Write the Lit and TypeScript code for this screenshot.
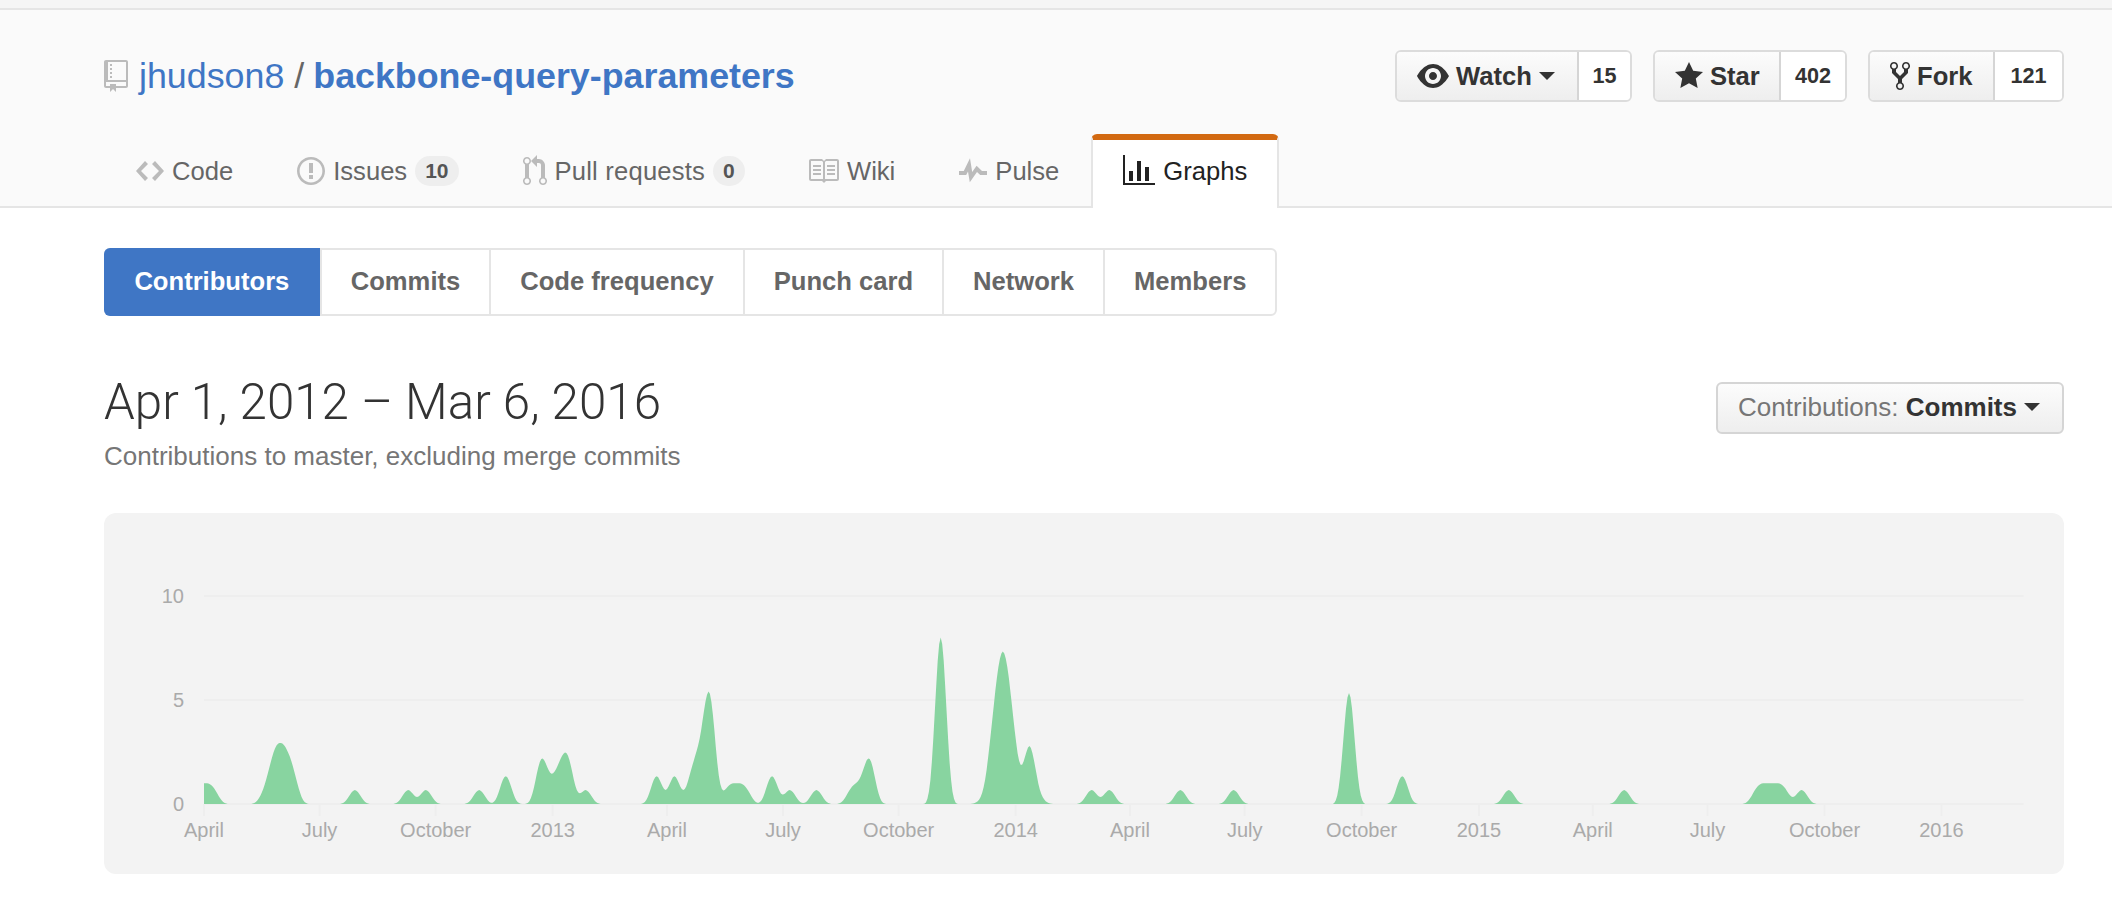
import { LitElement, html, css, svg } from 'lit';
import { customElement } from 'lit/decorators.js';

// octicon paths, drawn at 2x
const ICONS: Record<string, { box: string; w: number; h: number; d: string }> = {
  repo: { box: '0 0 12 16', w: 24, h: 32, d: 'M4 9H3V8h1v1zm0-3H3v1h1V6zm0-2H3v1h1V4zm0-2H3v1h1V2zm8-1v12c0 .55-.45 1-1 1H6v2l-1.5-1.5L3 16v-2H1c-.55 0-1-.45-1-1V1c0-.55.45-1 1-1h10c.55 0 1 .45 1 1zm-1 10H1v2h2v-1h3v1h5v-2zm0-10H2v9h9V1z' },
  code: { box: '0 0 14 16', w: 28, h: 32, d: 'M9.5 3L8 4.5 11.5 8 8 11.5 9.5 13 14 8 9.5 3zm-5 0L0 8l4.5 5L6 11.5 2.5 8 6 4.5 4.5 3z' },
  issue: { box: '0 0 14 16', w: 28, h: 32, d: 'M7 2.3c3.14 0 5.7 2.56 5.7 5.7s-2.56 5.7-5.7 5.7A5.71 5.71 0 0 1 1.3 8c0-3.14 2.56-5.7 5.7-5.7zM7 1C3.14 1 0 4.14 0 8s3.14 7 7 7 7-3.14 7-7-3.14-7-7-7zm1 3H6v5h2V4zm0 6H6v2h2v-2z' },
  pull: { box: '0 0 12 16', w: 24, h: 32, d: 'M11 11.28V5c-.03-.78-.34-1.47-.94-2.06C9.46 2.35 8.78 2.03 8 2H7V0L4 3l3 3V4h1c.27.02.48.11.69.31.21.2.3.42.31.69v6.28A1.993 1.993 0 0 0 10 15a1.993 1.993 0 0 0 1-3.72zm-1 2.92c-.66 0-1.2-.55-1.2-1.2 0-.65.55-1.2 1.2-1.2.65 0 1.2.55 1.2 1.2 0 .65-.55 1.2-1.2 1.2zM4 3c0-1.11-.89-2-2-2a1.993 1.993 0 0 0-1 3.72v6.56A1.993 1.993 0 0 0 2 15a1.993 1.993 0 0 0 1-3.72V4.72c.59-.34 1-.98 1-1.72zm-.8 10c0 .66-.55 1.2-1.2 1.2-.65 0-1.2-.55-1.2-1.2 0-.65.55-1.2 1.2-1.2.65 0 1.2.55 1.2 1.2zM2 4.2C1.34 4.2.8 3.65.8 3c0-.65.55-1.2 1.2-1.2.65 0 1.2.55 1.2 1.2 0 .65-.55 1.2-1.2 1.2z' },
  book: { box: '1 0 15 16', w: 30, h: 32, d: 'M3 5h4v1H3V5zm0 3h4V7H3v1zm0 2h4V9H3v1zm11-5h-4v1h4V5zm0 2h-4v1h4V7zm0 2h-4v1h4V9zm2-6v9c0 .55-.45 1-1 1H9.5l-1 1-1-1H2c-.55 0-1-.45-1-1V3c0-.55.45-1 1-1h5.5l1 1 1-1H15c.55 0 1 .45 1 1zm-8 .5L7.5 3H2v9h6V3.5zm7-.5H9.5l-.5.5V12h6V3z' },
  pulse: { box: '0 0 14 16', w: 28, h: 32, d: 'M11.5 8L8.8 5.4 6.6 8.5 5.5 1.6 2.38 8H0v2h3.6l.9-1.8.9 5.4L9 8.5l1.6 1.5H14V8h-2.5z' },
  graph: { box: '0 0 16 16', w: 32, h: 32, d: 'M16 14v1H0V0h1v14h15zM5 13H3V8h2v5zm4 0H7V3h2v10zm4 0h-2V6h2v7z' },
  eye: { box: '0 0 16 16', w: 32, h: 32, d: 'M8.06 2C3 2 0 8 0 8s3 6 8.06 6C13 14 16 8 16 8s-3-6-7.94-6zM8 12c-2.2 0-4-1.78-4-4 0-2.2 1.8-4 4-4 2.22 0 4 1.8 4 4 0 2.22-1.78 4-4 4zm2-4c0 1.11-.89 2-2 2-1.11 0-2-.89-2-2 0-1.11.89-2 2-2 1.11 0 2 .89 2 2z' },
  star: { box: '0 0 14 16', w: 28, h: 32, d: 'M14 6l-4.9-.64L7 1 4.9 5.36 0 6l3.6 3.26L2.67 14 7 11.67 11.33 14l-.93-4.74L14 6z' },
  fork: { box: '0 0 10 16', w: 20, h: 32, d: 'M8 1a1.993 1.993 0 0 0-1 3.72V6L5 8 3 6V4.72A1.993 1.993 0 0 0 2 1a1.993 1.993 0 0 0-1 3.72V6.5l3 3v1.78A1.993 1.993 0 0 0 5 15a1.993 1.993 0 0 0 1-3.72V9.5l3-3V4.72A1.993 1.993 0 0 0 8 1zM2 4.2C1.34 4.2.8 3.65.8 3c0-.65.55-1.2 1.2-1.2.65 0 1.2.55 1.2 1.2 0 .65-.55 1.2-1.2 1.2zm3 10c-.66 0-1.2-.55-1.2-1.2 0-.65.55-1.2 1.2-1.2.65 0 1.2.55 1.2 1.2 0 .65-.55 1.2-1.2 1.2zm3-10c-.66 0-1.2-.55-1.2-1.2 0-.65.55-1.2 1.2-1.2.65 0 1.2.55 1.2 1.2 0 .65-.55 1.2-1.2 1.2z' },
};

const icon = (name: string) => {
  const i = ICONS[name];
  return html`<svg class="icon" viewBox=${i.box} width=${i.w} height=${i.h} fill="currentColor"><path d=${i.d}></path></svg>`;
};

// commits per week, only the weeks that have any
const COMMITS: Record<number, number> = {
  0: 1, 1: 1, 7: 1, 8: 3, 9: 3, 10: 2, 17: 1, 23: 1, 25: 1, 31: 1, 34: 2,
  38: 3, 39: 1, 40: 2, 41: 3, 43: 1, 51: 2, 53: 2, 55: 2, 56: 3, 57: 7.2,
  59: 1, 60: 1, 61: 1, 64: 2, 66: 1, 69: 1, 73: 1, 74: 1, 75: 3, 83: 12,
  88: 0.5, 89: 5, 90: 8.5, 91: 5, 92: 0.6, 93: 3.9, 94: 0.5, 100: 1, 102: 1,
  110: 1, 116: 1, 129: 8, 135: 2, 147: 1, 160: 1, 175: 1, 176: 1, 177: 1,
  178: 1, 180: 1,
};

const WEEKS = 205;
const WEEK_W = 8.876;
const UNIT_H = 20.8;
const X0 = 100;
const Y0 = 291;

const TICKS: [string, number][] = [
  ['April', 100], ['July', 215.6], ['October', 331.7], ['2013', 448.7],
  ['April', 563], ['July', 679], ['October', 794.7], ['2014', 911.7],
  ['April', 1026], ['July', 1140.7], ['October', 1257.7], ['2015', 1375],
  ['April', 1488.8], ['July', 1603.5], ['October', 1720.5], ['2016', 1837.5],
];

// uniform b-spline through the weekly counts, same shape as a d3 basis area
function areaPath() {
  const at = (i: number) => COMMITS[Math.max(0, Math.min(WEEKS, i))] ?? 0;
  let d = `M${X0} ${Y0}`;
  for (let w = 0; w < WEEKS; w++) {
    for (let s = 0; s < 6; s++) {
      const t = s / 6;
      const v =
        (((1 - t) ** 3) * at(w - 1) +
          (3 * t ** 3 - 6 * t ** 2 + 4) * at(w) +
          (-3 * t ** 3 + 3 * t ** 2 + 3 * t + 1) * at(w + 1) +
          t ** 3 * at(w + 2)) / 6;
      d += `L${(X0 + (w + t) * WEEK_W).toFixed(1)} ${(Y0 - v * UNIT_H).toFixed(1)}`;
    }
  }
  return d + `L${X0 + WEEKS * WEEK_W} ${Y0}Z`;
}

@customElement('contrib-chart')
export class ContribChart extends LitElement {
  static styles = css`
    :host {
      display: block;
      height: 361px;
      background: #f3f3f3;
      border-radius: 12px;
    }
    svg {
      display: block;
    }
    .grid {
      stroke: #eeeeee;
      stroke-width: 2;
    }
    .area {
      fill: #88d4a0;
    }
    .label {
      font: 20px 'Liberation Sans', Arial, sans-serif;
      fill: #aaaaaa;
    }
  `;

  render() {
    return html`
      <svg width="1960" height="361" viewBox="0 0 1960 361">
        ${[0, 5, 10].map(v => {
          const y = Y0 - v * UNIT_H;
          return svg`
            <line class="grid" x1=${X0} x2=${X0 + WEEKS * WEEK_W} y1=${y} y2=${y}></line>
            <text class="label" x="80" y=${y + 7} text-anchor="end">${v}</text>
          `;
        })}
        ${TICKS.map(
          ([name, x]) => svg`
            <line class="grid" x1=${x} x2=${x} y1=${Y0} y2=${Y0 + 12}></line>
            <text class="label" x=${x} y="324" text-anchor="middle">${name}</text>
          `,
        )}
        <path class="area" d=${areaPath()}></path>
      </svg>
    `;
  }
}

@customElement('app-root')
export class AppRoot extends LitElement {
  static styles = css`
    :host {
      display: block;
      color: #333;
      font-family: 'Liberation Sans', Arial, sans-serif;
      padding-top: 8px;
      background: #fff linear-gradient(#f5f5f5, #f5f5f5) no-repeat 0 0 / 100% 8px;
    }
    .icon {
      display: block;
      flex: none;
    }
    .head {
      background: #fafafa;
      border-top: 2px solid #e5e5e5;
      border-bottom: 2px solid #e5e5e5;
      padding: 40px 48px 0 104px;
      height: 156px;
    }
    .title-row {
      display: flex;
      align-items: center;
      justify-content: space-between;
      height: 52px;
    }
    .title {
      display: flex;
      align-items: center;
      font-size: 35.8px;
      color: #666;
    }
    .title .icon {
      color: #bbb;
      margin-right: 11px;
    }
    .title a,
    .title b {
      color: #3f76c5;
    }
    .title .slash {
      margin: 0 9px 0 10px;
    }
    .actions {
      display: flex;
      gap: 21px;
    }
    .group {
      display: flex;
      height: 52px;
      box-sizing: border-box;
      border: 2px solid #dcdcdc;
      border-radius: 6px;
      font-weight: 700;
    }
    .btn {
      display: flex;
      align-items: center;
      gap: 7px;
      box-sizing: border-box;
      padding: 0 20px;
      font-size: 25.6px;
      border-right: 2px solid #d5d5d5;
      border-radius: 4px 0 0 4px;
      background: linear-gradient(#fcfcfc, #eeeeee);
    }
    .watch { width: 182px; }
    .star { width: 126px; }
    .fork { width: 125px; }
    .count {
      display: flex;
      align-items: center;
      justify-content: center;
      font-size: 21.6px;
      background: #fff;
      border-radius: 0 4px 4px 0;
    }
    .watch + .count { width: 51px; }
    .star + .count { width: 64px; }
    .fork + .count { width: 67px; }
    .caret {
      width: 0;
      height: 0;
      border: 8px solid transparent;
      border-top-color: #333;
      border-bottom: 0;
    }
    .tabs {
      display: flex;
      margin-top: 32px;
      height: 74px;
    }
    .tab {
      display: flex;
      align-items: center;
      gap: 8px;
      padding: 0 32px;
      font-size: 25.6px;
      color: #666;
    }
    .tab.wide {
      letter-spacing: 0.2px;
    }
    .tab .icon {
      color: #bbb;
    }
    .tab.active {
      box-sizing: border-box;
      height: 74px;
      padding: 0 30px 6px;
      color: #222;
      background: #fff;
      border-top: 6px solid #d26911;
      border-left: 2px solid #e5e5e5;
      border-right: 2px solid #e5e5e5;
      border-radius: 6px 6px 0 0;
      position: relative;
      z-index: 1;
    }
    .tab.active .icon {
      color: #222;
    }
    .counter {
      font-size: 21px;
      font-weight: 700;
      color: #555;
      background: #eee;
      border-radius: 16px;
      padding: 4px 10px;
      line-height: 22px;
    }
    main {
      padding: 40px 48px 30px 104px;
    }
    .subnav {
      display: inline-flex;
      height: 68px;
      box-sizing: border-box;
      border: 2px solid #e5e5e5;
      border-radius: 6px;
    }
    .subnav a {
      display: flex;
      align-items: center;
      padding: 0 29px 2px;
      font-size: 25.6px;
      font-weight: 700;
      color: #666;
      border-left: 2px solid #e5e5e5;
    }
    .subnav a:first-child {
      border-left: 0;
    }
    .subnav a.on {
      margin: -2px 0 -2px -2px;
      padding: 0 30.4px 2px 30.4px;
      color: #fff;
      background: #3f76c5;
      border-radius: 6px 0 0 6px;
    }
    .summary {
      display: flex;
      justify-content: space-between;
      align-items: flex-start;
      margin-top: 58px;
    }
    h2 {
      margin: 0;
      font-family: Roboto, 'Liberation Sans', sans-serif;
      font-size: 49.3px;
      font-weight: 300;
      line-height: 56px;
      color: #333;
    }
    .note {
      margin-top: 8px;
      font-size: 26px;
      line-height: 36px;
      color: #767676;
    }
    .select {
      display: flex;
      align-items: center;
      gap: 7px;
      height: 52px;
      box-sizing: border-box;
      margin-top: 8px;
      padding: 0 22px 2px 20px;
      font-size: 26px;
      color: #767676;
      border: 2px solid #d5d5d5;
      border-radius: 6px;
      background: linear-gradient(#fcfcfc, #eeeeee);
    }
    .select b {
      color: #333;
    }
    contrib-chart {
      margin-top: 39px;
    }
  `;

  render() {
    return html`
      <header class="head">
        <div class="title-row">
          <div class="title">
            ${icon('repo')}
            <a>jhudson8</a><span class="slash">/</span><b>backbone-query-parameters</b>
          </div>
          <div class="actions">
            <div class="group">
              <div class="btn watch">${icon('eye')}<span>Watch</span><i class="caret"></i></div>
              <div class="count">15</div>
            </div>
            <div class="group">
              <div class="btn star">${icon('star')}<span>Star</span></div>
              <div class="count">402</div>
            </div>
            <div class="group">
              <div class="btn fork">${icon('fork')}<span>Fork</span></div>
              <div class="count">121</div>
            </div>
          </div>
        </div>
        <nav class="tabs">
          <a class="tab">${icon('code')}Code</a>
          <a class="tab">${icon('issue')}Issues<span class="counter">10</span></a>
          <a class="tab wide">${icon('pull')}Pull requests<span class="counter">0</span></a>
          <a class="tab">${icon('book')}Wiki</a>
          <a class="tab">${icon('pulse')}Pulse</a>
          <a class="tab active">${icon('graph')}Graphs</a>
        </nav>
      </header>
      <main>
        <nav class="subnav">
          <a class="on">Contributors</a>
          <a>Commits</a>
          <a>Code frequency</a>
          <a>Punch card</a>
          <a>Network</a>
          <a>Members</a>
        </nav>
        <div class="summary">
          <div>
            <h2>Apr 1, 2012 – Mar 6, 2016</h2>
            <div class="note">Contributions to master, excluding merge commits</div>
          </div>
          <div class="select"><span>Contributions: <b>Commits</b></span><i class="caret"></i></div>
        </div>
        <contrib-chart></contrib-chart>
      </main>
    `;
  }
}
